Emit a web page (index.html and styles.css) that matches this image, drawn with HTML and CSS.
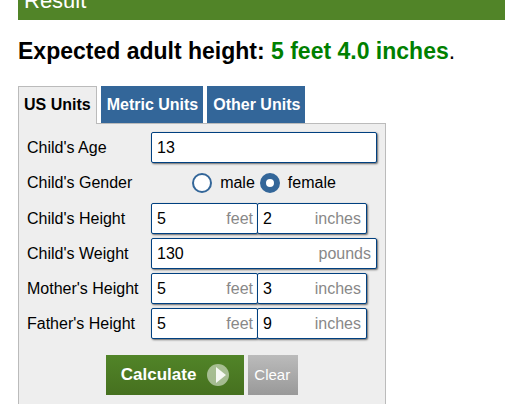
FILE: index.html
```html
<!DOCTYPE html>
<html lang="en">
<head>
<meta charset="utf-8">
<title>Height Calculator</title>
<link rel="stylesheet" href="styles.css">
</head>
<body>
<main class="page">
  <h2 class="result-bar">Result</h2>
  <p class="result"><b>Expected adult height: <span class="value">5 feet 4.0 inches</span></b>.</p>
  <nav class="tabs">
    <a class="tab active" href="#us">US Units</a>
    <a class="tab" href="#metric">Metric Units</a>
    <a class="tab" href="#other">Other Units</a>
  </nav>
  <form class="panel" id="us">
    <div class="row">
      <label for="age">Child's Age</label>
      <div class="fields"><span class="field wide"><input id="age" type="text" value="13"></span></div>
    </div>
    <div class="row gender" role="radiogroup" aria-labelledby="gender-label">
      <span id="gender-label">Child's Gender</span>
      <div class="fields choices">
        <label class="choice"><input type="radio" name="gender">male</label>
        <label class="choice"><input type="radio" name="gender" checked>female</label>
      </div>
    </div>
    <div class="row">
      <label for="child-feet">Child's Height</label>
      <div class="fields">
        <span class="field feet"><input id="child-feet" type="text" value="5"><span class="unit">feet</span></span>
        <span class="field inches"><input aria-label="Child's height, inches" type="text" value="2"><span class="unit">inches</span></span>
      </div>
    </div>
    <div class="row">
      <label for="weight">Child's Weight</label>
      <div class="fields"><span class="field wide"><input id="weight" type="text" value="130"><span class="unit">pounds</span></span></div>
    </div>
    <div class="row">
      <label for="mother-feet">Mother's Height</label>
      <div class="fields">
        <span class="field feet"><input id="mother-feet" type="text" value="5"><span class="unit">feet</span></span>
        <span class="field inches"><input aria-label="Mother's height, inches" type="text" value="3"><span class="unit">inches</span></span>
      </div>
    </div>
    <div class="row">
      <label for="father-feet">Father's Height</label>
      <div class="fields">
        <span class="field feet"><input id="father-feet" type="text" value="5"><span class="unit">feet</span></span>
        <span class="field inches"><input aria-label="Father's height, inches" type="text" value="9"><span class="unit">inches</span></span>
      </div>
    </div>
    <div class="actions">
      <button class="calculate" type="button">Calculate
        <svg width="22" height="22" viewBox="0 0 22 22" aria-hidden="true"><circle cx="11" cy="11" r="11" fill="#fff" fill-opacity=".5"/><path d="M9 3 19 11 9 19Z" fill="#fff" fill-opacity=".9"/></svg>
      </button>
      <button class="clear" type="reset">Clear</button>
    </div>
  </form>
</main>
</body>
</html>
```
FILE: styles.css
```css
* {
  box-sizing: border-box;
}

html {
  overflow: hidden;
}

body {
  margin: 0;
  background: #fff;
  color: #000;
  font: 16px/20px "Liberation Sans", Arial, sans-serif;
}

.page {
  display: flex;
  flex-direction: column;
  min-height: 100vh;
  padding-left: 18px;
}

.result-bar {
  display: flex;
  align-items: flex-end;
  height: 20px;
  margin: 0;
  padding: 0 6px 7px;
  overflow: hidden;
  background: #518428;
  color: #fff;
  font-size: 22px;
  font-weight: normal;
  line-height: 25px;
}

.result {
  margin: 18px 0 22px;
  font-size: 23px;
  line-height: 26px;
}

.value {
  color: #008000;
}

.tabs {
  display: flex;
  gap: 4px;
}

.tab {
  padding: 9px 5px 8px 6px;
  background: #336699;
  color: #fff;
  font-weight: bold;
  text-decoration: none;
}

/* The open tab covers the panel's top border. */
.tab.active {
  position: relative;
  z-index: 1;
  margin-bottom: -1px;
  padding: 8px 5px 9px;
  border: 1px solid #bbb;
  border-bottom: 0;
  background: #eee;
  color: #000;
}

.panel {
  display: flex;
  flex-direction: column;
  flex-grow: 1;
  gap: 4px;
  width: fit-content;
  padding: 8px 8px 12px;
  border: 1px solid #bbb;
  border-bottom: 0;
  background: #eee;
}

.row {
  display: grid;
  grid-template-columns: 124px 226px;
  align-items: center;
}

.gender {
  height: 32px;
}

.fields {
  display: flex;
}

.field {
  position: relative;
}

.wide {
  width: 100%;
}

.feet {
  width: 107px;
}

.inches {
  width: 110px;
  margin-left: -1px;
}

.field input {
  display: block;
  width: 100%;
  height: 31px;
  padding: 0 5px;
  border: 1px solid #004080;
  border-radius: 2px;
  background: #fff;
  box-shadow: 1px 1px 2px #666;
  color: #000;
  font: inherit;
}

.unit {
  position: absolute;
  top: 6px;
  right: 6px;
  color: #888;
  pointer-events: none;
}

.feet .unit {
  right: 5px;
}

.choices {
  justify-content: center;
  gap: 5px;
}

.choice {
  display: flex;
  align-items: center;
  gap: 8px;
}

.choice input {
  appearance: none;
  width: 20px;
  height: 20px;
  margin: 0;
  border: 2px solid #336699;
  border-radius: 50%;
  background: #fff;
}

.choice input:checked {
  border-width: 6px;
}

.actions {
  display: flex;
  justify-content: center;
  gap: 4px;
  margin-top: 12px;
}

.actions button {
  height: 40px;
  border: 0;
  color: #fff;
  font-family: inherit;
}

.calculate {
  display: flex;
  align-items: center;
  gap: 11px;
  padding: 0 15px;
  background: linear-gradient(#518428, #46701f);
  font-size: 17px;
  font-weight: bold;
}

.clear {
  padding: 0 8px 2px 6px;
  background: linear-gradient(#bbb, #999);
  font-size: 15px;
}
```
